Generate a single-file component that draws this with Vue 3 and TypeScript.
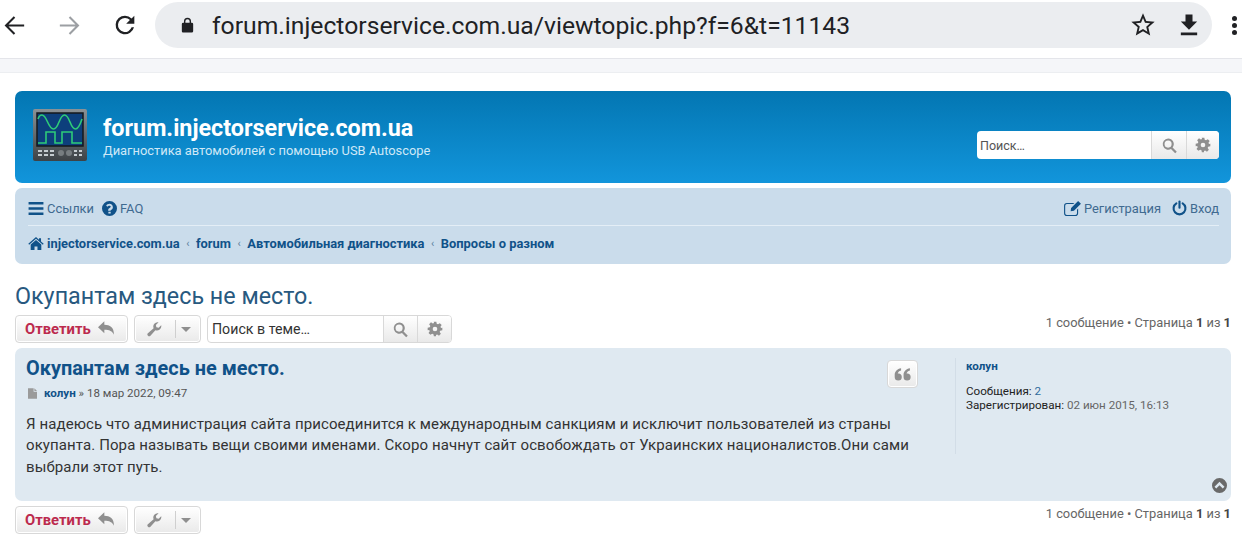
<script setup lang="ts">
const pagination = '1 сообщение • Страница '
const crumbs: string[] = ['forum', 'Автомобильная диагностика', 'Вопросы о разном']
</script>

<template>
  <div class="screen">
    <header class="chrome">
      <svg class="nav-icon back" viewBox="0 0 24 24"><path d="M20 12H5M12 5l-7 7 7 7" /></svg>
      <svg class="nav-icon fwd" viewBox="0 0 24 24"><path d="M4 12h15M12 5l7 7-7 7" /></svg>
      <svg class="reload" viewBox="0 0 24 24"><path d="M17.65 6.35A7.96 7.96 0 0 0 12 4a8 8 0 1 0 7.73 10h-2.08A6 6 0 1 1 12 6c1.66 0 3.14.69 4.22 1.78L13 11h7V4z" /></svg>
      <div class="omnibox">
        <svg class="lock" viewBox="0 0 24 24"><path d="M18 8h-1V6a5 5 0 0 0-10 0v2H6a2 2 0 0 0-2 2v10c0 1.100.9 2 2 2h12a2 2 0 0 0 2-2V10a2 2 0 0 0-2-2zM9 8V6a3 3 0 0 1 6 0v2z" /></svg>
        <span class="url">forum.injectorservice.com.ua/viewtopic.php?f=6&amp;t=11143</span>
        <svg class="star" viewBox="0 0 24 24"><path d="M22 9.240l-7.190-.62L12 2 9.190 8.630 2 9.240l5.460 4.730L5.820 21 12 17.270 18.180 21l-1.630-7.030zM12 15.400l-3.760 2.270 1-4.280-3.320-2.880 4.380-.38L12 6.100l1.710 4.040 4.380.38-3.320 2.880 1 4.280z" /></svg>
        <svg class="download" viewBox="0 0 24 24"><path d="M19 9h-4V3H9v6H5l7 7zM5 18.500v2.200h14v-2.200z" /></svg>
      </div>
      <div class="kebab"><i></i><i></i><i></i></div>
    </header>
    <div class="strip"></div>

    <main class="page">
      <section class="headerbar">
        <div class="brand">
          <svg class="logo" viewBox="0 0 54 54">
            <defs>
              <linearGradient id="case" x1="0" y1="0" x2="0" y2="1">
                <stop offset="0" stop-color="#8b9296" />
                <stop offset="1" stop-color="#3d4246" />
              </linearGradient>
            </defs>
            <rect x="0" y="1" width="54" height="52" rx="2" fill="url(#case)" />
            <rect x="4" y="5" width="46" height="33" fill="#0d3f7c" stroke="#15191c" stroke-width="1.500" />
            <path d="M5 11C6 8 7.500 7 9 7C14 7 15 21 20.500 21C26 21 26 7 31.500 7C37 7 37 21 42.500 21C45 21 47 17 49 11" fill="none" stroke="#2ecb78" stroke-width="1.600" />
            <path d="M5 35H13V24H22V35H29V24H39V35H49" fill="none" stroke="#2ecb78" stroke-width="1.600" />
            <path d="M5 43h4M11 43h4M17 43h4M5 47h4M11 47h4M17 47h4M41 43h3M46 43h3M41 47h3M46 47h3" stroke="#c5ccd0" stroke-width="2" />
            <circle cx="28" cy="45" r="3" fill="#777d80" />
            <circle cx="36" cy="45" r="3" fill="#777d80" />
          </svg>
          <div class="brand-text">
            <h1>forum.injectorservice.com.ua</h1>
            <p>Диагностика автомобилей с помощью USB Autoscope</p>
          </div>
        </div>
        <div class="searchbox header-search">
          <span class="search-input">Поиск…</span>
          <span class="search-btn">
            <svg class="i-search" viewBox="0 0 24 24"><path d="M10 2a8 8 0 0 1 6.400 12.800l5.900 5.900-2.300 2.300-5.900-5.900A8 8 0 1 1 10 2zm0 3a5 5 0 1 0 0 10 5 5 0 0 0 0-10z" /></svg>
          </span>
          <span class="search-btn narrow">
            <svg class="i-gear" viewBox="0 0 24 24"><path d="M10 1h4l.6 3.200 1.900.8 2.700-1.800 2.800 2.800-1.800 2.700.8 1.900L23 10v4l-3.200.6-.8 1.900 1.800 2.700-2.800 2.800-2.700-1.800-1.900.8L13.700 23h-3.400l-.6-3.200-1.900-.8-2.700 1.800-2.800-2.800 1.800-2.700-.8-1.900L1 14v-4l3.200-.6.8-1.900-1.800-2.700 2.800-2.800 2.700 1.800 1.900-.8zM12 8.500a3.500 3.500 0 1 0 0 7 3.500 3.500 0 0 0 0-7z" fill-rule="evenodd" /></svg>
          </span>
        </div>
      </section>

      <nav class="navbar">
        <div class="nav-row top-row">
          <div class="nav-group">
            <span class="nav-link">
              <svg class="i-bars" viewBox="0 0 16 14"><path d="M0 0h16v2.600H0zM0 5.700h16v2.600H0zM0 11.400h16V14H0z" /></svg>Ссылки
            </span>
            <span class="nav-link">
              <svg class="i-help" viewBox="0 0 24 24"><path fill-rule="evenodd" d="M12 0a12 12 0 1 1 0 24 12 12 0 0 1 0-24zm.3 4.500c-2.700 0-4.500 1.200-5.600 3l2.300 1.700c.7-.9 1.400-1.500 2.800-1.500 1.100 0 2.200.6 2.200 1.600 0 .8-.6 1.200-1.700 1.800-1.200.7-2.500 1.600-2.500 3.500v.9h3.700c0-1.500 3.900-1.800 3.900-5.700 0-3.200-2.600-5.300-5.100-5.300zM10.200 17v3h3.700v-3z" /></svg>FAQ
            </span>
          </div>
          <div class="nav-group right">
            <span class="nav-link">
              <svg class="i-edit" viewBox="0 0 18 16"><path d="M3 2h8l-1.200 1.200H3A1.800 1.800 0 0 0 1.200 5v8A1.800 1.800 0 0 0 3 14.800h9a1.800 1.800 0 0 0 1.800-1.800V9.200L15 8v5a3 3 0 0 1-3 3H3a3 3 0 0 1-3-3V5a3 3 0 0 1 3-3zM15 0l3 3-7.500 7.500L7 11l.5-3.500z" /></svg>Регистрация
            </span>
            <span class="nav-link">
              <svg class="i-power" viewBox="0 0 24 24"><path d="M12 1.500v10" fill="none" stroke="currentColor" stroke-width="3.400" stroke-linecap="round" /><path d="M7 4.600a9.500 9.500 0 1 0 10 0" fill="none" stroke="currentColor" stroke-width="3.400" stroke-linecap="round" /></svg>Вход
            </span>
          </div>
        </div>
        <div class="nav-row crumbs">
          <svg class="i-home" viewBox="0 0 26 22"><path d="M13 0l5 4.500V2h3.500v5.600L26 11.500l-1.400 1.600L13 3 1.400 13.100 0 11.500zM13 5l9 7.800V22h-6.500v-6h-5v6H4v-9.200z" /></svg>
          <b>injectorservice.com.ua</b>
          <template v-for="c in crumbs" :key="c">
            <span class="sep">‹</span><b>{{ c }}</b>
          </template>
        </div>
      </nav>

      <h2 class="topic-title">Окупантам здесь не место.</h2>

      <div class="action-bar">
        <div class="tools">
          <span class="button reply">Ответить
            <svg class="i-reply" viewBox="0 0 24 20"><path d="M9.500 0v5C18 5 24 9 24 20c-2.500-5.500-7-7.500-14.500-7.500V18L0 9z" /></svg>
          </span>
          <span class="button wrench-btn">
            <svg class="i-wrench" viewBox="0 0 24 24"><path d="M23 6.500a7 7 0 0 1-9.600 6.500L5.500 22a2.800 2.800 0 0 1-4-.2 2.800 2.800 0 0 1-.1-3.900l9.200-8A7 7 0 0 1 18.500.400l-4.300 4.300.8 3.700 3.700.9 4-4z" /></svg>
            <span class="caret-sep"></span>
            <span class="caret"></span>
          </span>
          <div class="searchbox topic-search">
            <span class="search-input">Поиск в теме…</span>
            <span class="search-btn">
              <svg class="i-search" viewBox="0 0 24 24"><path d="M10 2a8 8 0 0 1 6.400 12.800l5.900 5.900-2.300 2.300-5.900-5.900A8 8 0 1 1 10 2zm0 3a5 5 0 1 0 0 10 5 5 0 0 0 0-10z" /></svg>
            </span>
            <span class="search-btn">
              <svg class="i-gear" viewBox="0 0 24 24"><path d="M10 1h4l.6 3.200 1.900.8 2.700-1.800 2.800 2.800-1.800 2.700.8 1.900L23 10v4l-3.200.6-.8 1.900 1.800 2.700-2.800 2.800-2.700-1.800-1.900.8L13.700 23h-3.400l-.6-3.200-1.900-.8-2.700 1.800-2.800-2.800 1.800-2.700-.8-1.900L1 14v-4l3.200-.6.8-1.900-1.800-2.700 2.800-2.800 2.700 1.800 1.900-.8zM12 8.500a3.500 3.500 0 1 0 0 7 3.500 3.500 0 0 0 0-7z" fill-rule="evenodd" /></svg>
            </span>
          </div>
        </div>
        <div class="pagination">{{ pagination }}<b>1</b> из <b>1</b></div>
      </div>

      <article class="post">
        <div class="post-body">
          <div class="post-head">
            <div>
              <h3>Окупантам здесь не место.</h3>
              <div class="post-meta">
                <svg class="i-file" viewBox="0 0 12 14"><path d="M0 0h7.500v4.500H12V14H0zM8.500 0L12 3.500H8.500z" /></svg>
                <span><b>колун</b> » 18 мар 2022, 09:47</span>
              </div>
            </div>
            <span class="button quote">
              <svg class="i-quote" viewBox="0 0 24 18"><path d="M11 12.500a5 5 0 1 1-10 0V9c0-4.500 3.500-8 9-9v3.200C7 4 5.500 5.800 5.300 7.700 8.500 7 11 9 11 12.500zM23.500 12.500a5 5 0 1 1-10 0V9c0-4.500 3.500-8 9-9v3.200c-3 .8-4.500 2.600-4.700 4.500 3.200-.7 5.700 1.300 5.700 4.800z" /></svg>
            </span>
          </div>
          <p class="content">Я надеюсь что администрация сайта присоединится к международным санкциям и исключит пользователей из страны окупанта. Пора называть вещи своими именами. Скоро начнут сайт освобождать от Украинских националистов.Они сами выбрали этот путь.</p>
        </div>
        <aside class="profile">
          <b class="author">колун</b>
          <div class="stats">
            <div>Сообщения: <span class="link">2</span></div>
            <div>Зарегистрирован: <span class="muted">02 июн 2015, 16:13</span></div>
          </div>
        </aside>
        <svg class="to-top" viewBox="0 0 24 24"><path fill-rule="evenodd" d="M12 0a12 12 0 1 1 0 24 12 12 0 0 1 0-24zm0 6L4 14l2.800 2.800L12 11.600l5.200 5.200L20 14z" /></svg>
      </article>

      <div class="action-bar bottom">
        <div class="tools">
          <span class="button reply">Ответить
            <svg class="i-reply" viewBox="0 0 24 20"><path d="M9.500 0v5C18 5 24 9 24 20c-2.500-5.500-7-7.500-14.500-7.500V18L0 9z" /></svg>
          </span>
          <span class="button wrench-btn">
            <svg class="i-wrench" viewBox="0 0 24 24"><path d="M23 6.500a7 7 0 0 1-9.600 6.500L5.500 22a2.800 2.800 0 0 1-4-.2 2.800 2.800 0 0 1-.1-3.900l9.200-8A7 7 0 0 1 18.500.400l-4.300 4.300.8 3.700 3.700.9 4-4z" /></svg>
            <span class="caret-sep"></span>
            <span class="caret"></span>
          </span>
        </div>
        <div class="pagination">{{ pagination }}<b>1</b> из <b>1</b></div>
      </div>
    </main>
  </div>
</template>

<style scoped>
.screen {
  width: 1242px;
  height: 539px;
  overflow: hidden;
  background: #fff;
  font-family: Roboto, "Liberation Sans", sans-serif;
  color: #333;
}

.chrome {
  height: 59px;
  box-sizing: border-box;
  padding: 2px 0 10px;
  display: flex;
  align-items: center;
  border-bottom: 1px solid #e4e5ea;
  background: #fff;
}
.chrome svg { fill: #202124; flex: none; }
.nav-icon {
  width: 29px;
  height: 29px;
  fill: none !important;
  stroke: #202124;
  stroke-width: 1.700;
}
.fwd { margin-left: 26px; stroke: #9c9fa3; }
.reload { margin-left: 27px; width: 28px; height: 28px; }
.omnibox {
  margin-left: 16px;
  width: 1057px;
  height: 46px;
  border-radius: 23px;
  background: #ebedf0;
  display: flex;
  align-items: center;
}
.lock { width: 17px; height: 17px; margin-left: 24px; }
.url {
  margin-left: 16px;
  font-size: 24.700px;
  color: #202124;
  white-space: nowrap;
  flex: 1;
}
.star { width: 28px; height: 28px; }
.download { width: 28px; height: 28px; margin: 0 9px 0 18px; }
.kebab {
  margin-left: 20px;
  display: flex;
  flex-direction: column;
  gap: 2px;
}
.kebab i {
  width: 5px;
  height: 5px;
  border-radius: 50%;
  background: #202124;
}

.strip {
  height: 13px;
  background: #f5f6f9;
  border-bottom: 1px solid #eceef1;
}

.page {
  padding: 18px 11px 0 15px;
}

.headerbar {
  height: 92px;
  box-sizing: border-box;
  border-radius: 7px;
  background: linear-gradient(#0376b2, #1295db);
  display: flex;
  justify-content: space-between;
  padding: 0 12px 0 18px;
  color: #fff;
}
.brand { display: flex; align-items: center; padding-bottom: 3px; }
.logo { width: 54px; height: 54px; margin-bottom: 2px; }
.brand-text { margin: 1px 0 0 16px; }
.brand-text h1 {
  margin: 0;
  font-size: 23.350px;
  line-height: 27px;
  font-weight: 700;
}
.brand-text p {
  margin: 1px 0 0;
  font-size: 12.880px;
  line-height: 15px;
  color: #cfe8f7;
}

.searchbox {
  display: flex;
  align-items: stretch;
  border-radius: 4px;
  background: #fff;
  overflow: hidden;
}
.header-search {
  width: 242px;
  height: 28px;
  margin-top: 40px;
}
.search-input {
  flex: 1;
  display: flex;
  align-items: center;
  padding-left: 3px;
  font-size: 12.500px;
  color: #555;
}
.search-btn {
  width: 35px;
  box-sizing: border-box;
  display: flex;
  align-items: center;
  justify-content: center;
  border-left: 1px solid #d9d9d9;
  background: linear-gradient(#fff, #e9e9e9);
}
.search-btn.narrow { width: 33px; }
.i-search { width: 17px; height: 17px; fill: #8f8f8f; }
.i-gear { width: 16px; height: 16px; fill: #8f8f8f; }

.navbar {
  margin-top: 5px;
  height: 76px;
  box-sizing: border-box;
  border-radius: 7px;
  background: #cadceb;
  padding: 0 12px 0 13px;
  color: #105289;
}
.nav-row { display: flex; align-items: center; }
.top-row {
  height: 38px;
  box-sizing: border-box;
  padding-top: 3px;
  justify-content: space-between;
  border-bottom: 1px solid #e4eef6;
}
.nav-group { display: flex; gap: 8px; }
.nav-group.right { gap: 11px; }
.nav-link {
  display: flex;
  align-items: center;
  gap: 3px;
  font-size: 12.900px;
  color: #3f6a90;
}
.nav-link svg { fill: #105289; color: #105289; flex: none; }
.i-bars { width: 16px; height: 13px; }
.i-help { width: 15px; height: 15px; }
.i-edit { width: 17px; height: 15px; }
.i-power { width: 15px; height: 16px; }
.crumbs {
  height: 34px;
  font-size: 12.900px;
  white-space: nowrap;
}
.crumbs b { font-weight: 700; }
.i-home { width: 16px; height: 13px; fill: #105289; margin-right: 3px; }
.sep { margin: 0 6.500px; color: #5c7f9d; font-size: 11px; }

.topic-title {
  margin: 19px 0 0;
  font-size: 23.300px;
  line-height: 26px;
  font-weight: 400;
  color: #28597f;
}

.action-bar {
  margin-top: 6px;
  display: flex;
  justify-content: space-between;
}
.action-bar.bottom { margin-top: 5px; }
.tools { display: flex; gap: 6px; }
.button {
  height: 28px;
  box-sizing: border-box;
  display: inline-flex;
  align-items: center;
  justify-content: center;
  border: 1px solid #d8d8d8;
  border-radius: 4px;
  background: linear-gradient(#fff, #e9e9e9);
  box-shadow: 0 0 0 1px #fff inset;
}
.reply {
  width: 113px;
  justify-content: flex-start;
  padding-left: 9px;
  gap: 7px;
  font-size: 14.800px;
  font-weight: 700;
  color: #bc2a4d;
}
.i-reply { width: 16px; height: 14px; fill: #8f8f8f; margin-bottom: 3px; }
.wrench-btn { width: 67px; justify-content: flex-start; padding-left: 12px; }
.i-wrench { width: 15px; height: 15px; fill: #8f8f8f; }
.caret-sep {
  width: 1px;
  height: 18px;
  margin: 0 5px 0 13px;
  background: #cfcfcf;
}
.caret {
  width: 0;
  height: 0;
  border-left: 5px solid transparent;
  border-right: 5px solid transparent;
  border-top: 5px solid #8f8f8f;
}
.topic-search {
  width: 245px;
  height: 28px;
  box-sizing: border-box;
  border: 1px solid #d8d8d8;
}
.topic-search .search-input { font-size: 14.200px; color: #333; padding-left: 4px; }
.topic-search .search-btn { width: 34px; }

.pagination {
  font-size: 12.860px;
  line-height: 15px;
  color: #666;
}
.pagination b { color: #444; }

.post {
  position: relative;
  margin-top: 5px;
  height: 153px;
  box-sizing: border-box;
  border-radius: 7px;
  background: #dfe9f1;
  display: flex;
  padding: 9px 0 0 11px;
}
.post-body { width: 892px; flex: none; }
.post-head { display: flex; justify-content: space-between; }
.post-head h3 {
  margin: 0;
  font-size: 19.900px;
  line-height: 24px;
  font-weight: 700;
  color: #105289;
}
.post-meta {
  display: flex;
  align-items: center;
  margin-top: 5px;
  font-size: 11.600px;
  line-height: 15px;
  color: #555;
}
.post-meta b { color: #105289; }
.i-file { width: 9px; height: 11px; fill: #9a9a9a; margin: 0 7px 0 2px; }
.quote { width: 31px; height: 28px; margin-top: 3px; }
.i-quote { width: 17px; height: 13px; fill: #8f8f8f; }
.content {
  margin: 13px 0 0;
  font-size: 15px;
  line-height: 21.300px;
  color: #333;
  letter-spacing: 0.100px;
}
.profile {
  margin: 1px 0 0 37px;
  height: 96px;
  padding-left: 10px;
  border-left: 1px solid #d2dde7;
  font-size: 11.630px;
  line-height: 14px;
  color: #222;
}
.author { display: block; color: #105289; font-size: 11.600px; padding-top: 1px; }
.stats { margin-top: 11px; }
.link { color: #2f6c9c; }
.muted { color: #666; }
.to-top {
  position: absolute;
  right: 4px;
  bottom: 8px;
  width: 15px;
  height: 15px;
  fill: #6a6a6a;
}
</style>

<style>
html, body { background: #fff; overflow: hidden; }
</style>
